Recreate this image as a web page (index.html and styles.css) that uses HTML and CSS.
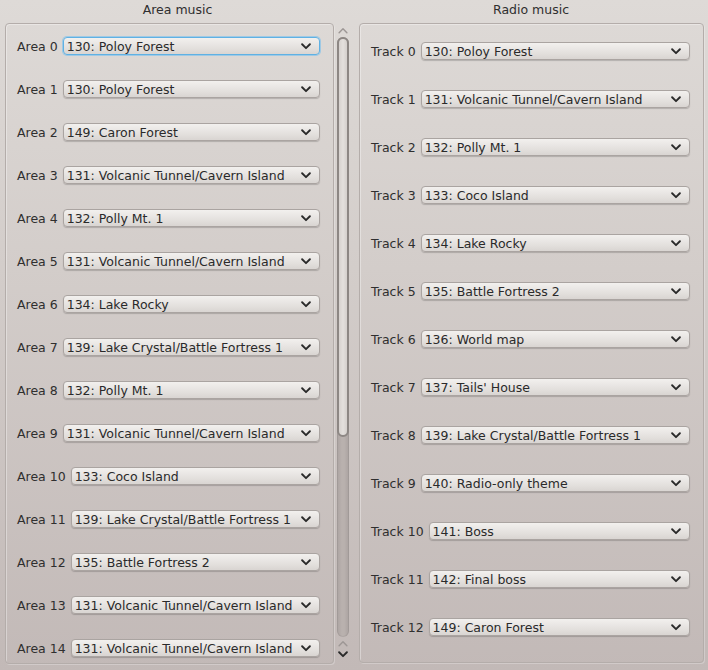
FILE: index.html
```html
<!DOCTYPE html>
<html>
<head>
<meta charset="utf-8">
<link rel="stylesheet" href="styles.css">
</head>
<body>
<div class="window">
  <section class="col col-left">
    <div class="title">Area music</div>
    <div class="scroll">
      <div class="group group-left">
        <div class="row"><span class="lbl">Area 0</span><div class="combo focus"><span>130: Poloy Forest</span><svg class="chev" viewBox="0 0 9 6"><path d="M1 1 L4.5 4.5 L8 1"/></svg></div></div>
        <div class="row"><span class="lbl">Area 1</span><div class="combo"><span>130: Poloy Forest</span><svg class="chev" viewBox="0 0 9 6"><path d="M1 1 L4.5 4.5 L8 1"/></svg></div></div>
        <div class="row"><span class="lbl">Area 2</span><div class="combo"><span>149: Caron Forest</span><svg class="chev" viewBox="0 0 9 6"><path d="M1 1 L4.5 4.5 L8 1"/></svg></div></div>
        <div class="row"><span class="lbl">Area 3</span><div class="combo"><span>131: Volcanic Tunnel/Cavern Island</span><svg class="chev" viewBox="0 0 9 6"><path d="M1 1 L4.5 4.5 L8 1"/></svg></div></div>
        <div class="row"><span class="lbl">Area 4</span><div class="combo"><span>132: Polly Mt. 1</span><svg class="chev" viewBox="0 0 9 6"><path d="M1 1 L4.5 4.5 L8 1"/></svg></div></div>
        <div class="row"><span class="lbl">Area 5</span><div class="combo"><span>131: Volcanic Tunnel/Cavern Island</span><svg class="chev" viewBox="0 0 9 6"><path d="M1 1 L4.5 4.5 L8 1"/></svg></div></div>
        <div class="row"><span class="lbl">Area 6</span><div class="combo"><span>134: Lake Rocky</span><svg class="chev" viewBox="0 0 9 6"><path d="M1 1 L4.5 4.5 L8 1"/></svg></div></div>
        <div class="row"><span class="lbl">Area 7</span><div class="combo"><span>139: Lake Crystal/Battle Fortress 1</span><svg class="chev" viewBox="0 0 9 6"><path d="M1 1 L4.5 4.5 L8 1"/></svg></div></div>
        <div class="row"><span class="lbl">Area 8</span><div class="combo"><span>132: Polly Mt. 1</span><svg class="chev" viewBox="0 0 9 6"><path d="M1 1 L4.5 4.5 L8 1"/></svg></div></div>
        <div class="row"><span class="lbl">Area 9</span><div class="combo"><span>131: Volcanic Tunnel/Cavern Island</span><svg class="chev" viewBox="0 0 9 6"><path d="M1 1 L4.5 4.5 L8 1"/></svg></div></div>
        <div class="row"><span class="lbl">Area 10</span><div class="combo"><span>133: Coco Island</span><svg class="chev" viewBox="0 0 9 6"><path d="M1 1 L4.5 4.5 L8 1"/></svg></div></div>
        <div class="row"><span class="lbl">Area 11</span><div class="combo"><span>139: Lake Crystal/Battle Fortress 1</span><svg class="chev" viewBox="0 0 9 6"><path d="M1 1 L4.5 4.5 L8 1"/></svg></div></div>
        <div class="row"><span class="lbl">Area 12</span><div class="combo"><span>135: Battle Fortress 2</span><svg class="chev" viewBox="0 0 9 6"><path d="M1 1 L4.5 4.5 L8 1"/></svg></div></div>
        <div class="row"><span class="lbl">Area 13</span><div class="combo"><span>131: Volcanic Tunnel/Cavern Island</span><svg class="chev" viewBox="0 0 9 6"><path d="M1 1 L4.5 4.5 L8 1"/></svg></div></div>
        <div class="row"><span class="lbl">Area 14</span><div class="combo"><span>131: Volcanic Tunnel/Cavern Island</span><svg class="chev" viewBox="0 0 9 6"><path d="M1 1 L4.5 4.5 L8 1"/></svg></div></div>
      </div>
      <div class="scrollbar">
        <svg class="arrow up light" viewBox="0 0 9 6"><path d="M1 5 L4.5 1.5 L8 5"/></svg>
        <div class="groove"><div class="slider"></div></div>
        <svg class="arrow up light" viewBox="0 0 9 6"><path d="M1 5 L4.5 1.5 L8 5"/></svg>
        <svg class="arrow down" viewBox="0 0 9 6"><path d="M1 1 L4.5 4.5 L8 1"/></svg>
      </div>
    </div>
  </section>
  <section class="col col-right">
    <div class="title">Radio music</div>
    <div class="group group-right">
      <div class="row"><span class="lbl">Track 0</span><div class="combo"><span>130: Poloy Forest</span><svg class="chev" viewBox="0 0 9 6"><path d="M1 1 L4.5 4.5 L8 1"/></svg></div></div>
      <div class="row"><span class="lbl">Track 1</span><div class="combo"><span>131: Volcanic Tunnel/Cavern Island</span><svg class="chev" viewBox="0 0 9 6"><path d="M1 1 L4.5 4.5 L8 1"/></svg></div></div>
      <div class="row"><span class="lbl">Track 2</span><div class="combo"><span>132: Polly Mt. 1</span><svg class="chev" viewBox="0 0 9 6"><path d="M1 1 L4.5 4.5 L8 1"/></svg></div></div>
      <div class="row"><span class="lbl">Track 3</span><div class="combo"><span>133: Coco Island</span><svg class="chev" viewBox="0 0 9 6"><path d="M1 1 L4.5 4.5 L8 1"/></svg></div></div>
      <div class="row"><span class="lbl">Track 4</span><div class="combo"><span>134: Lake Rocky</span><svg class="chev" viewBox="0 0 9 6"><path d="M1 1 L4.5 4.5 L8 1"/></svg></div></div>
      <div class="row"><span class="lbl">Track 5</span><div class="combo"><span>135: Battle Fortress 2</span><svg class="chev" viewBox="0 0 9 6"><path d="M1 1 L4.5 4.5 L8 1"/></svg></div></div>
      <div class="row"><span class="lbl">Track 6</span><div class="combo"><span>136: World map</span><svg class="chev" viewBox="0 0 9 6"><path d="M1 1 L4.5 4.5 L8 1"/></svg></div></div>
      <div class="row"><span class="lbl">Track 7</span><div class="combo"><span>137: Tails' House</span><svg class="chev" viewBox="0 0 9 6"><path d="M1 1 L4.5 4.5 L8 1"/></svg></div></div>
      <div class="row"><span class="lbl">Track 8</span><div class="combo"><span>139: Lake Crystal/Battle Fortress 1</span><svg class="chev" viewBox="0 0 9 6"><path d="M1 1 L4.5 4.5 L8 1"/></svg></div></div>
      <div class="row"><span class="lbl">Track 9</span><div class="combo"><span>140: Radio-only theme</span><svg class="chev" viewBox="0 0 9 6"><path d="M1 1 L4.5 4.5 L8 1"/></svg></div></div>
      <div class="row"><span class="lbl">Track 10</span><div class="combo"><span>141: Boss</span><svg class="chev" viewBox="0 0 9 6"><path d="M1 1 L4.5 4.5 L8 1"/></svg></div></div>
      <div class="row"><span class="lbl">Track 11</span><div class="combo"><span>142: Final boss</span><svg class="chev" viewBox="0 0 9 6"><path d="M1 1 L4.5 4.5 L8 1"/></svg></div></div>
      <div class="row"><span class="lbl">Track 12</span><div class="combo"><span>149: Caron Forest</span><svg class="chev" viewBox="0 0 9 6"><path d="M1 1 L4.5 4.5 L8 1"/></svg></div></div>
    </div>
  </section>
</div>
</body>
</html>
```
FILE: styles.css
```css
html, body {
  margin: 0;
  padding: 0;
  height: 100%;
}
body {
  background: linear-gradient(to bottom, #dedad7 0%, #d3cdca 40%, #c2b9b7 100%);
  font-family: "DejaVu Sans", sans-serif;
  font-size: 12.5px;
  color: #2f2f2f;
  overflow: hidden;
}
.window {
  display: flex;
  gap: 9px;
  padding: 0 5px 0 5px;
  height: 670px;
  box-sizing: border-box;
}
.col {
  display: flex;
  flex-direction: column;
}
.col-left { width: 345px; }
.col-right { width: 344px; }
.title {
  height: 23px;
  line-height: 20px;
  text-align: center;
  flex: none;
}
.scroll {
  display: flex;
  gap: 2px;
  flex: 1;
  min-height: 0;
}
.group {
  border: 1px solid #b4adaa;
  border-radius: 4px;
  box-shadow: inset 1px 1px 0 rgba(255,255,255,0.35), 1px 1px 0 rgba(255,255,255,0.25);
  box-sizing: border-box;
  display: flex;
  flex-direction: column;
}
.group-left {
  width: 330px;
  height: 641px;
  padding: 13px 13px 0 11px;
  gap: 25px;
}
.group-right {
  width: 345px;
  height: 640px;
  padding: 18px 13px 0 11px;
  gap: 30px;
}
.row {
  display: flex;
  align-items: center;
  gap: 5px;
  height: 18px;
}
.lbl {
  white-space: nowrap;
  flex: none;
}
.combo {
  flex: 1;
  height: 18px;
  box-sizing: border-box;
  border: 1px solid #aaa4a1;
  border-radius: 4px;
  background: linear-gradient(to bottom, #f2f0ee 0%, #e4e1de 60%, #d9d5d2 100%);
  box-shadow: 0 1px 1px rgba(0,0,0,0.18);
  display: flex;
  align-items: center;
  padding: 0 8px 0 3px;
  color: #2a2a2a;
}
.combo span {
  flex: 1;
  white-space: nowrap;
  overflow: hidden;
}
.combo.focus {
  border-color: #5fb1e4;
  box-shadow: 0 0 0 1px rgba(110,190,240,0.55);
}
.chev {
  width: 10px;
  height: 7px;
  flex: none;
}
.chev path, .arrow path {
  fill: none;
  stroke: #2a2a2a;
  stroke-width: 1.7;
  stroke-linecap: round;
  stroke-linejoin: round;
}
.scrollbar {
  width: 14px;
  display: flex;
  flex-direction: column;
  align-items: center;
  padding-top: 4px;
  box-sizing: border-box;
}
.arrow {
  width: 10px;
  height: 7px;
  flex: none;
}
.arrow.light path { stroke: #9d9795; stroke-width: 1.3; }
.scrollbar .arrow.up:first-child { margin-bottom: 3px; }
.groove {
  width: 12px;
  height: 600px;
  border-radius: 6px;
  background: linear-gradient(to right, #aba3a1, #b9b1ae 40%, #b9b1ae 60%, #aaa2a0);
  box-shadow: inset 0 0 0 1px rgba(0,0,0,0.06);
  margin-bottom: 3px;
  flex: none;
}
.slider {
  height: 400px;
  box-sizing: border-box;
  border: 2px solid #8d8784;
  border-radius: 6px;
  background: linear-gradient(to right, #d6d1ce, #e4e0dd 50%, #d4cfcc);
}
.scrollbar .arrow.down { margin-top: 4px; }
```
